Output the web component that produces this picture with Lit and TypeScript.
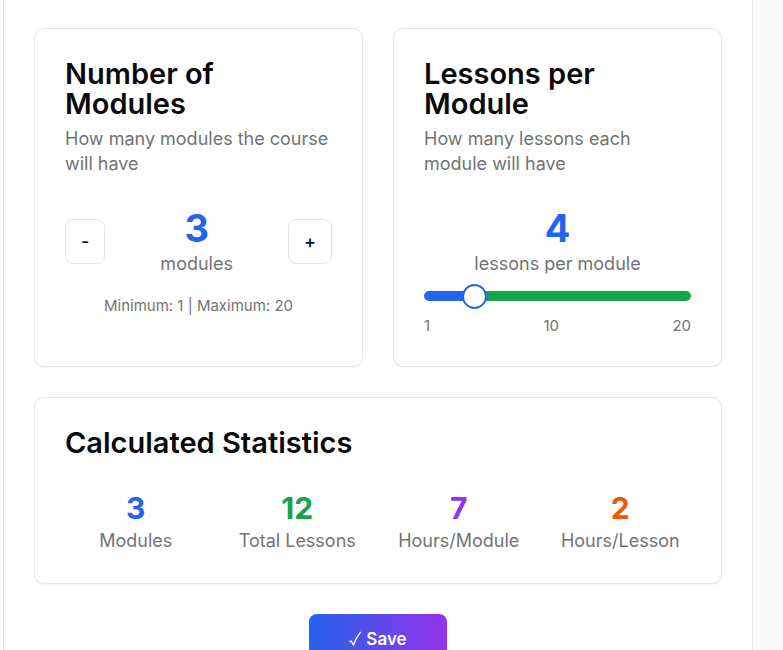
import { LitElement, html, css } from "lit";
import { customElement, state } from "lit/decorators.js";

const MIN = 1;
const MAX = 20;

@customElement("app-root")
export class AppRoot extends LitElement {
  @state() private modules = 3;
  @state() private lessons = 4;

  static styles = css`
    :host {
      display: block;
      box-sizing: border-box;
      height: 100vh;
      overflow: hidden;
      padding: 0 30px 0 3px;
      background: #fafafa;
      color: #0a0a0a;
      font-family: Inter, "Liberation Sans", sans-serif;
      font-size: 18px;
      line-height: 25px;
    }
    *,
    *::before,
    *::after {
      box-sizing: border-box;
    }
    h2,
    p {
      margin: 0;
    }
    .panel {
      display: flex;
      flex-direction: column;
      gap: 30px;
      min-height: 100%;
      padding: 28px 30px;
      background: #fff;
      border: solid #e5e5e5;
      border-width: 0 1px;
    }
    .settings {
      display: grid;
      grid-template-columns: 1fr 1fr;
      gap: 30px;
    }
    .card {
      display: flex;
      flex-direction: column;
      gap: 30px;
      padding: 30px;
      background: #fff;
      border: 1px solid #e5e5e5;
      border-radius: 10px;
      box-shadow: 0 1px 2px rgba(0, 0, 0, 0.05);
    }
    .heading {
      display: flex;
      flex-direction: column;
      gap: 7px;
    }
    .title {
      font-size: 29px;
      line-height: 30px;
      font-weight: 600;
    }
    .muted {
      color: #737373;
    }
    .stepper {
      display: flex;
      align-items: center;
      justify-content: space-between;
    }
    .step {
      height: 45px;
      padding: 0 15px;
      background: #fff;
      border: 1px solid #e5e5e5;
      border-radius: 8px;
      color: #0a0a0a;
      font: inherit;
      font-weight: 500;
    }
    .value {
      text-align: center;
    }
    .number {
      color: #2563eb;
      font-size: 38px;
      line-height: 45px;
      font-weight: 700;
    }
    .small {
      font-size: 15px;
      line-height: 20px;
    }
    .limits {
      margin-top: 20px;
      text-align: center;
    }
    .range {
      appearance: none;
      display: block;
      width: 100%;
      height: 25px;
      margin: 7px 0 8px;
      background: transparent;
    }
    .range::-webkit-slider-runnable-track {
      height: 10px;
      border-radius: 5px;
      background: linear-gradient(
        to right,
        #2563eb var(--fill),
        #16a34a var(--fill)
      );
    }
    .range::-webkit-slider-thumb {
      appearance: none;
      width: 25px;
      height: 25px;
      margin-top: -7px;
      background: #fff;
      border: 2px solid #2563eb;
      border-radius: 50%;
    }
    .scale {
      display: flex;
      justify-content: space-between;
    }
    .stats {
      display: grid;
      grid-template-columns: repeat(4, 1fr);
      gap: 20px;
      text-align: center;
    }
    .stat {
      font-size: 30px;
      line-height: 40px;
      font-weight: 700;
    }
    .blue {
      color: #2563eb;
    }
    .green {
      color: #16a34a;
    }
    .purple {
      color: #9333ea;
    }
    .orange {
      color: #ea580c;
    }
    .save {
      display: flex;
      align-items: center;
      gap: 5px;
      align-self: center;
      height: 50px;
      padding: 0 40px;
      background: linear-gradient(to right, #2563eb, #9333ea);
      border: 0;
      border-radius: 8px;
      color: #fff;
      font: inherit;
      font-size: 17px;
      font-weight: 600;
    }
    .check {
      width: 12px;
      height: 16px;
      fill: none;
      stroke: currentColor;
      stroke-linecap: round;
      stroke-linejoin: round;
    }
  `;

  private step(by: number) {
    this.modules = Math.min(MAX, Math.max(MIN, this.modules + by));
  }

  private slide(e: Event) {
    this.lessons = Number((e.target as HTMLInputElement).value);
  }

  render() {
    const fill = ((this.lessons - MIN) / (MAX - MIN)) * 100;
    const stats = [
      { value: this.modules, label: "Modules", tone: "blue" },
      { value: this.modules * this.lessons, label: "Total Lessons", tone: "green" },
      { value: 7, label: "Hours/Module", tone: "purple" },
      { value: 2, label: "Hours/Lesson", tone: "orange" },
    ];
    return html`
      <main class="panel">
        <div class="settings">
          <section class="card">
            <div class="heading">
              <h2 class="title">Number of Modules</h2>
              <p class="muted">How many modules the course will have</p>
            </div>
            <div>
              <div class="stepper">
                <button class="step" aria-label="Fewer modules" @click=${() => this.step(-1)}>-</button>
                <div class="value">
                  <div class="number">${this.modules}</div>
                  <div class="muted">modules</div>
                </div>
                <button class="step" aria-label="More modules" @click=${() => this.step(1)}>+</button>
              </div>
              <p class="limits small muted">Minimum: ${MIN} | Maximum: ${MAX}</p>
            </div>
          </section>
          <section class="card">
            <div class="heading">
              <h2 class="title">Lessons per Module</h2>
              <p class="muted">How many lessons each module will have</p>
            </div>
            <div>
              <div class="value">
                <div class="number">${this.lessons}</div>
                <label class="muted" for="lessons">lessons per module</label>
              </div>
              <input
                class="range"
                id="lessons"
                type="range"
                min=${MIN}
                max=${MAX}
                .value=${String(this.lessons)}
                style="--fill: ${fill}%"
                @input=${this.slide}
              />
              <div class="scale small muted">
                <span>1</span><span>10</span><span>20</span>
              </div>
            </div>
          </section>
        </div>
        <section class="card">
          <h2 class="title">Calculated Statistics</h2>
          <div class="stats">
            ${stats.map(
              (s) => html`<div>
                <div class="stat ${s.tone}">${s.value}</div>
                <div class="muted">${s.label}</div>
              </div>`
            )}
          </div>
        </section>
        <button class="save">
          <svg class="check" viewBox="0 0 12 16" aria-hidden="true">
            <path d="M1 10.6 L2.2 10 L4.4 14 C6 9.5 8.2 5.2 11.4 1.4" stroke-width="1.4" />
          </svg>
          Save
        </button>
      </main>
    `;
  }
}
